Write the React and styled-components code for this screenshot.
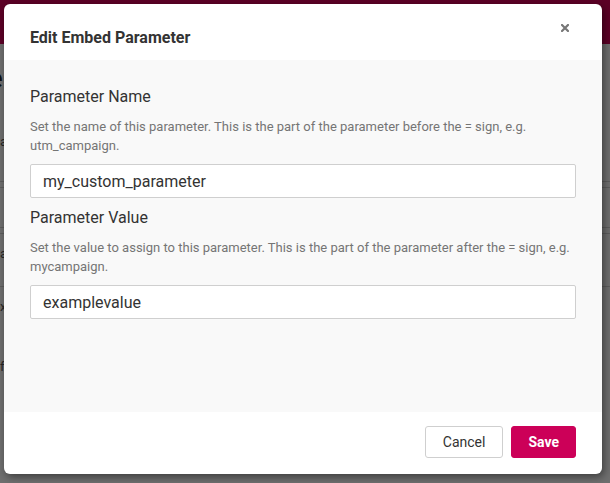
import React from 'react';
import styled, { createGlobalStyle } from 'styled-components';

const Global = createGlobalStyle`
  html, body { margin: 0; padding: 0; }
  body {
    width: 610px;
    height: 483px;
    overflow: hidden;
    font-family: Roboto, "Liberation Sans", sans-serif;
    background: #f7f7f7;
  }
  * { box-sizing: border-box; }
`;

const Page = styled.div`
  position: relative;
  width: 610px;
  height: 483px;
  overflow: hidden;
`;

const PageHeader = styled.div`
  height: 44px;
  background: #cc0055;
`;

const PageBody = styled.div`
  display: flex;
  flex-direction: column;
  padding-top: 18px;
`;

const PageTitle = styled.div`
  font-size: 28px;
  color: #222;
  margin-left: -12px;
  height: 60px;
`;

const PageRow = styled.div`
  height: ${(p) => p.h}px;
  border-bottom: 1px solid ${(p) => (p.line ? '#cfcfcf' : 'transparent')};
  font-size: 13px;
  color: #555;
  line-height: 40px;
`;

const Overlay = styled.div`
  position: absolute;
  inset: 0;
  background: rgba(0, 0, 0, 0.55);
  padding: 4px 0 0 4px;
`;

const Modal = styled.div`
  width: 598px;
  height: 470px;
  background: #fff;
  border-radius: 6px;
  box-shadow: 2px 3px 8px rgba(0, 0, 0, 0.45);
  display: flex;
  flex-direction: column;
  overflow: hidden;
`;

const Header = styled.div`
  height: 56px;
  display: flex;
  align-items: center;
  padding: 0 26px;
  position: relative;
`;

const Title = styled.h2`
  margin: 10px 0 0;
  font-size: 16px;
  font-weight: 700;
  color: #333;
`;

const Close = styled.button`
  position: absolute;
  top: 20px;
  right: 33px;
  width: 8px;
  height: 8px;
  border: 0;
  background: none;
  padding: 0;
  color: #777;
  display: flex;
  cursor: pointer;
`;

const Body = styled.div`
  flex: 1;
  background: #f9f9f9;
  padding: 26px 26px 0;
  display: flex;
  flex-direction: column;
`;

const Field = styled.div`
  display: flex;
  flex-direction: column;
  margin-bottom: 9px;
`;

const Label = styled.label`
  font-size: 16px;
  line-height: 22px;
  color: #333;
`;

const Hint = styled.p`
  margin: 10px 0 9px;
  font-size: 13px;
  line-height: 18.5px;
  color: #757575;
`;

const Input = styled.input`
  height: 34px;
  width: 100%;
  border: 1px solid #cfcfcf;
  border-radius: 2px;
  background: #fff;
  padding: 0 12px;
  font-family: inherit;
  font-size: 16px;
  color: #333;
  outline: none;
`;

const Footer = styled.div`
  height: 62px;
  display: flex;
  align-items: center;
  justify-content: flex-end;
  gap: 8px;
  padding: 0 26px 2px;
`;

const Button = styled.button`
  height: 32px;
  padding: 0 ${(p) => (p.primary ? 16 : 17)}px;
  border-radius: 3px;
  font-family: inherit;
  font-size: 14px;
  font-weight: ${(p) => (p.primary ? 700 : 400)};
  border: 1px solid ${(p) => (p.primary ? '#cc0058' : '#cfcfcf')};
  background: ${(p) => (p.primary ? '#cc0058' : '#fff')};
  color: ${(p) => (p.primary ? '#fff' : '#333')};
  cursor: pointer;
`;

const CloseIcon = () => (
  <svg width="8" height="8" viewBox="0 0 8 8">
    <path d="M1 1L7 7M7 1L1 7" stroke="currentColor" strokeWidth="2.2" strokeLinecap="square" />
  </svg>
);

export default function App() {
  return (
    <Page>
      <Global />
      <PageHeader />
      <PageBody>
        <PageTitle>e</PageTitle>
        <PageRow h={60} line>a</PageRow>
        <PageRow h={6} line />
        <PageRow h={40} line />
        <PageRow h={6} line />
        <PageRow h={53} line>a</PageRow>
        <PageRow h={60}>x</PageRow>
        <PageRow h={60}>f</PageRow>
      </PageBody>
      <Overlay>
        <Modal role="dialog">
          <Header>
            <Title>Edit Embed Parameter</Title>
            <Close aria-label="Close">
              <CloseIcon />
            </Close>
          </Header>
          <Body>
            <Field>
              <Label>Parameter Name</Label>
              <Hint>
                Set the name of this parameter. This is the part of the parameter before the = sign, e.g.
                utm_campaign.
              </Hint>
              <Input defaultValue="my_custom_parameter" />
            </Field>
            <Field>
              <Label>Parameter Value</Label>
              <Hint>
                Set the value to assign to this parameter. This is the part of the parameter after the = sign, e.g.
                mycampaign.
              </Hint>
              <Input defaultValue="examplevalue" />
            </Field>
          </Body>
          <Footer>
            <Button>Cancel</Button>
            <Button primary>Save</Button>
          </Footer>
        </Modal>
      </Overlay>
    </Page>
  );
}
